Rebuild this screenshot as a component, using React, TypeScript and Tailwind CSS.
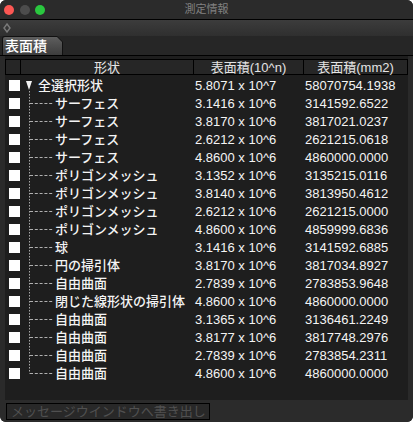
import React from 'react';

type Row = { name: string; exp: string; mm: string };

const rows: Row[] = [
  { name: '全選択形状', exp: '5.8071 x 10^7', mm: '58070754.1938' },
  { name: 'サーフェス', exp: '3.1416 x 10^6', mm: '3141592.6522' },
  { name: 'サーフェス', exp: '3.8170 x 10^6', mm: '3817021.0237' },
  { name: 'サーフェス', exp: '2.6212 x 10^6', mm: '2621215.0618' },
  { name: 'サーフェス', exp: '4.8600 x 10^6', mm: '4860000.0000' },
  { name: 'ポリゴンメッシュ', exp: '3.1352 x 10^6', mm: '3135215.0116' },
  { name: 'ポリゴンメッシュ', exp: '3.8140 x 10^6', mm: '3813950.4612' },
  { name: 'ポリゴンメッシュ', exp: '2.6212 x 10^6', mm: '2621215.0000' },
  { name: 'ポリゴンメッシュ', exp: '4.8600 x 10^6', mm: '4859999.6836' },
  { name: '球', exp: '3.1416 x 10^6', mm: '3141592.6885' },
  { name: '円の掃引体', exp: '3.8170 x 10^6', mm: '3817034.8927' },
  { name: '自由曲面', exp: '2.7839 x 10^6', mm: '2783853.9648' },
  { name: '閉じた線形状の掃引体', exp: '4.8600 x 10^6', mm: '4860000.0000' },
  { name: '自由曲面', exp: '3.1365 x 10^6', mm: '3136461.2249' },
  { name: '自由曲面', exp: '3.8177 x 10^6', mm: '3817748.2976' },
  { name: '自由曲面', exp: '2.7839 x 10^6', mm: '2783854.2311' },
  { name: '自由曲面', exp: '4.8600 x 10^6', mm: '4860000.0000' },
];

const font = "font-['Liberation_Sans','Noto_Sans_CJK_JP',sans-serif]";

// tree guide for one row: root gets the triangle, children get dotted lines
const TreeGuide: React.FC<{ index: number; last: boolean }> = ({ index, last }) => {
  if (index === 0) {
    return (
      <svg width="18" height="18" className="shrink-0">
        <polygon points="6,5 12,5 9,14" fill="#f2f2f2" />
        <line x1="9.5" y1="15" x2="9.5" y2="18" stroke="#a8a8a8" strokeDasharray="1.5 1.5" />
      </svg>
    );
  }
  return (
    <svg width="35" height="18" className="shrink-0">
      <line x1="9.5" y1="0" x2="9.5" y2={last ? 9.5 : 18} stroke="#a8a8a8" strokeDasharray="1.5 1.5" />
      <line x1="10" y1="9.5" x2="34" y2="9.5" stroke="#b0b0b0" strokeDasharray="3 1.8" />
    </svg>
  );
};

export default function App() {
  return (
    <div className={`h-[422px] w-[413px] bg-white ${font}`}>
      <div className="flex h-full flex-col overflow-hidden rounded-[6px] bg-[#2a2a2a]">
        {/* title bar */}
        <div className="grid h-[19px] shrink-0 grid-cols-[1fr_auto_1fr] items-center bg-[#2b2b2b]">
          <div className="flex items-center gap-[5.5px] pl-[4px]">
            <span className="h-[10px] w-[10px] rounded-full bg-[#fc5753]" />
            <span className="h-[10px] w-[10px] rounded-full bg-[#4c4c4c]" />
            <span className="h-[10px] w-[10px] rounded-full bg-[#2ac73f]" />
          </div>
          <div className="text-[11px] leading-none text-[#818181]">測定情報</div>
          <div />
        </div>
        <div className="h-px shrink-0 bg-black" />

        {/* toolbar */}
        <div className="flex h-[16px] shrink-0 items-center bg-gradient-to-b from-[#3c3c3c] to-[#2f2f2f] pl-[3px]">
          <svg width="8" height="10" viewBox="0 0 8 10">
            <polygon points="4,1 7,5 4,9 1,5" fill="none" stroke="#7a7a7a" strokeWidth="1.4" />
          </svg>
        </div>

        {/* tab strip */}
        <div className="flex h-[20px] shrink-0 items-end border-b border-black bg-[#262626] pl-[2px]">
          <div className="h-[19px] w-[61px] rounded-tl-[3px] bg-[#111] [clip-path:polygon(0_0,calc(100%-6px)_0,100%_6px,100%_100%,0_100%)]">
            <div className="ml-px mt-px flex h-[18px] w-[59px] items-center rounded-tl-[2px] bg-gradient-to-b from-[#5e5e5e] to-[#3d3d3d] pl-[2px] text-[14px] font-medium leading-none text-white [clip-path:polygon(0_0,calc(100%-5px)_0,100%_5px,100%_100%,0_100%)]">
              表面積
            </div>
          </div>
        </div>

        {/* content pane */}
        <div className="ml-[5px] mr-[5px] flex-1 bg-[#1e1e1e] pt-[3px]">
          <div className="grid h-[16px] grid-cols-[15px_173px_110px_1fr] border border-black bg-[#262626] text-[13px] leading-none text-[#e4e4e4]">
            <div className="border-r border-black" />
            <div className="flex items-center justify-center border-r border-black">形状</div>
            <div className="flex items-center justify-center border-r border-black">表面積(10^n)</div>
            <div className="flex items-center justify-center">表面積(mm2)</div>
          </div>
          <div className="mt-px">
            {rows.map((r, i) => (
              <div
                key={i}
                className="grid h-[18px] grid-cols-[15px_173px_110px_1fr] items-center text-[13px] font-medium leading-none text-[#f4f4f4]"
              >
                <div className="flex items-center pl-[4px]">
                  <span className="h-[11px] w-[11px] bg-white" />
                </div>
                <div className="flex h-full items-center">
                  <TreeGuide index={i} last={i === rows.length - 1} />
                  <span>{r.name}</span>
                </div>
                <div className="pl-[2px]">{r.exp}</div>
                <div className="pl-[2px]">{r.mm}</div>
              </div>
            ))}
          </div>
        </div>

        {/* bottom bar */}
        <div className="flex h-[22px] shrink-0 items-center bg-[#2b2b2b] pl-[6px]">
          <div className="flex h-[17px] w-[204px] items-center border border-black bg-[#282828] pl-[4px] text-[13px] leading-none text-[#505050]">
            メッセージウインドウへ書き出し
          </div>
        </div>
      </div>
    </div>
  );
}
